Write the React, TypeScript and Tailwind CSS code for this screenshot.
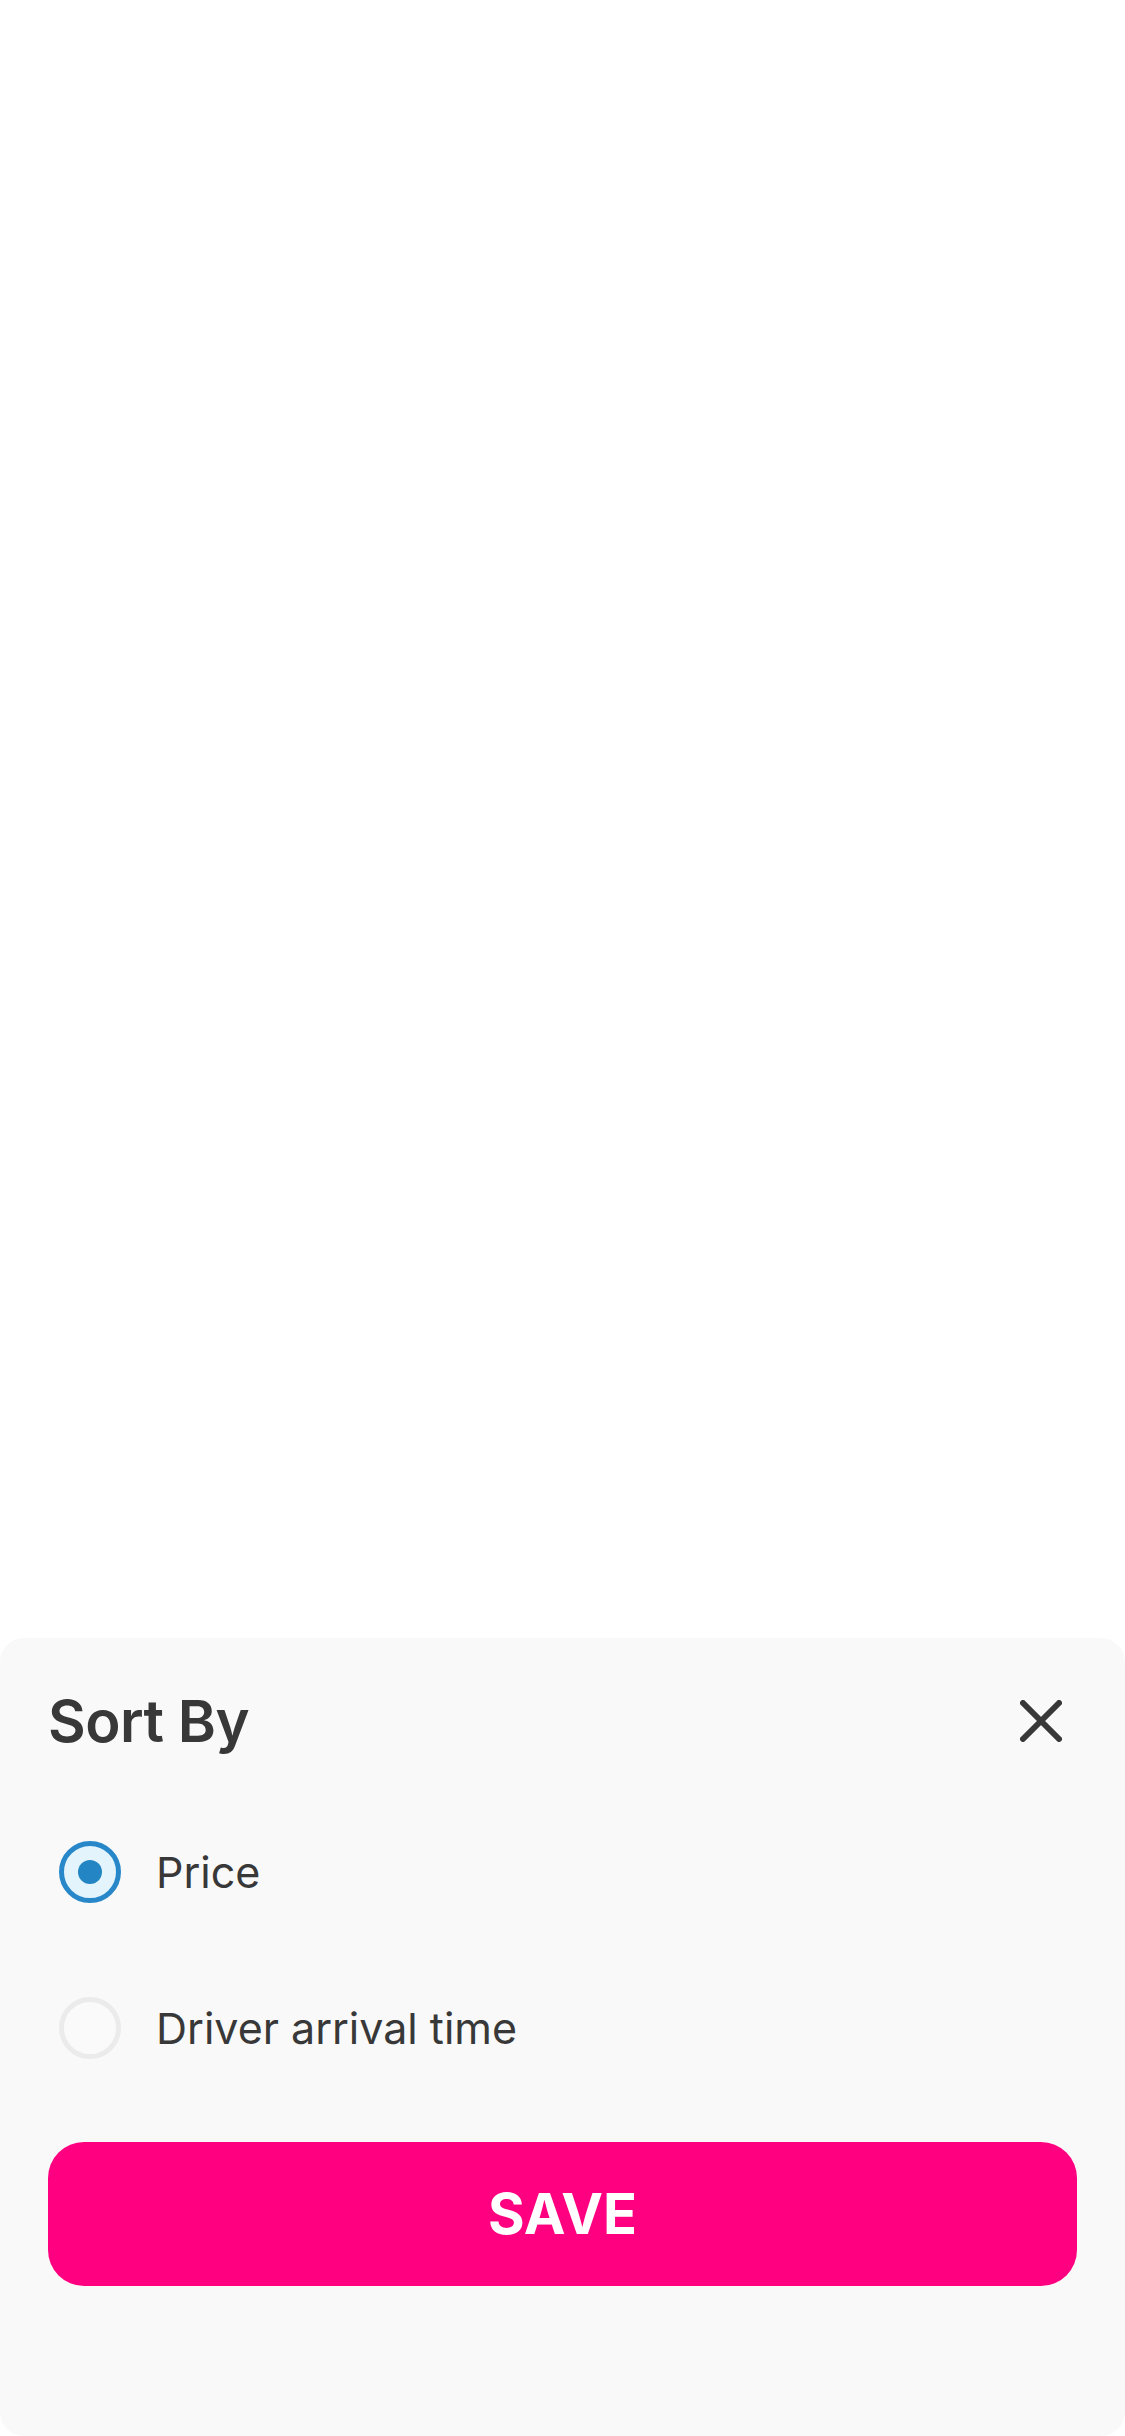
import { useState } from "react";

const options = [
  { id: "price", label: "Price" },
  { id: "arrival", label: "Driver arrival time" },
];

function Radio({ checked }: { checked: boolean }) {
  if (checked) {
    return (
      <div className="w-[62px] h-[62px] rounded-full border-[5px] border-[#2787c9] bg-[#e3f4fd] flex items-center justify-center shrink-0">
        <div className="w-[24px] h-[24px] rounded-full bg-[#2485c5]"></div>
      </div>
    );
  }
  return (
    <div className="w-[62px] h-[62px] rounded-full border-[5px] border-[#ebebeb] bg-[#fafafa] shrink-0"></div>
  );
}

export default function App() {
  const [selected, setSelected] = useState("price");

  return (
    <div
      className="w-[1125px] h-[2436px] bg-white flex flex-col justify-end"
      style={{ fontFamily: "Inter, 'Noto Sans', sans-serif" }}
    >
      {/* Bottom sheet */}
      <div className="h-[798px] bg-[#f9f9f9] rounded-[24px] px-12 pt-12 flex flex-col">
        <div className="h-[70px] flex items-center justify-between">
          <h2 className="text-[58px] leading-[70px] font-semibold text-[#383838] tracking-[-0.5px]">
            Sort By
          </h2>
          <button className="mr-[15px]">
            <svg width="42" height="42" viewBox="0 0 42 42">
              <path
                d="M3 3 L39 39 M39 3 L3 39"
                stroke="#383838"
                strokeWidth="6"
                strokeLinecap="round"
              />
            </svg>
          </button>
        </div>

        <div className="mt-[38px] flex flex-col">
          {options.map((opt) => (
            <button
              key={opt.id}
              onClick={() => setSelected(opt.id)}
              className="h-[156px] flex items-center pl-[11px] gap-[35px] text-left"
            >
              <Radio checked={selected === opt.id} />
              <span className="text-[43px] text-[#383838]">{opt.label}</span>
            </button>
          ))}
        </div>

        <button className="mt-[36px] h-[144px] w-full rounded-[36px] bg-[#ff0080] text-white text-[56px] font-bold flex items-center justify-center">
          SAVE
        </button>
      </div>
    </div>
  );
}
